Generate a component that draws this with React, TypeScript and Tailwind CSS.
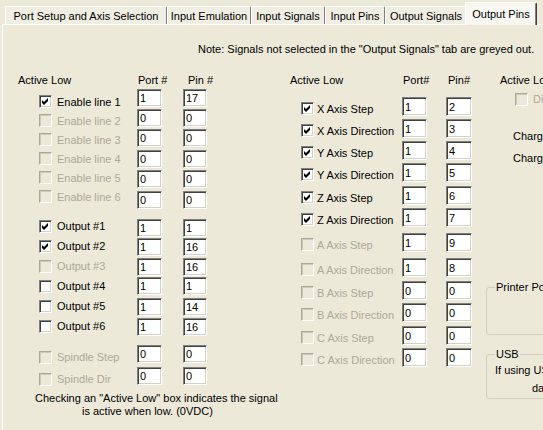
import React from "react";

type State = "on" | "off" | "dis";

const tabs = [
    { label: "Port Setup and Axis Selection", w: "w-[162px]" },
    { label: "Input Emulation", w: "w-[84px]" },
    { label: "Input Signals", w: "w-[74px]" },
    { label: "Input Pins", w: "w-[60px]" },
    { label: "Output Signals", w: "w-[82px]" },
];

const enableLabels: [string, State][] = [
    ["Enable line 1", "on"],
    ["Enable line 2", "dis"],
    ["Enable line 3", "dis"],
    ["Enable line 4", "dis"],
    ["Enable line 5", "dis"],
    ["Enable line 6", "dis"],
];

const outputLabels: [string, State][] = [
    ["Output #1", "on"],
    ["Output #2", "on"],
    ["Output #3", "dis"],
    ["Output #4", "off"],
    ["Output #5", "off"],
    ["Output #6", "off"],
];

const spindleLabels: [string, State][] = [
    ["Spindle Step", "dis"],
    ["Spindle Dir", "dis"],
];

// port, pin, row height
const enableBoxes = [
    ["1", "17", "h-[20px]"],
    ["0", "0", "h-[20px]"],
    ["0", "0", "h-[21px]"],
    ["0", "0", "h-[20px]"],
    ["0", "0", "h-[21px]"],
    ["0", "0", "h-[18px]"],
];

const outputBoxes = [
    ["1", "1", "h-[19px]"],
    ["1", "16", "h-[20px]"],
    ["1", "16", "h-[19px]"],
    ["1", "1", "h-[21px]"],
    ["1", "14", "h-[20px]"],
    ["1", "16", "h-[18px]"],
];

const spindleBoxes = [
    ["0", "0", "h-[22px]"],
    ["0", "0", "h-[18px]"],
];

const axisRows: { label: string; port: string; pin: string; state: State; h: string }[] = [
    { label: "X Axis Step", port: "1", pin: "2", state: "on", h: "h-[22px]" },
    { label: "X Axis Direction", port: "1", pin: "3", state: "on", h: "h-[22px]" },
    { label: "Y Axis Step", port: "1", pin: "4", state: "on", h: "h-[22px]" },
    { label: "Y Axis Direction", port: "1", pin: "5", state: "on", h: "h-[23px]" },
    { label: "Z Axis Step", port: "1", pin: "6", state: "on", h: "h-[22px]" },
    { label: "Z Axis Direction", port: "1", pin: "7", state: "on", h: "h-[25px]" },
    { label: "A Axis Step", port: "1", pin: "9", state: "dis", h: "h-[25px]" },
    { label: "A Axis Direction", port: "1", pin: "8", state: "dis", h: "h-[23px]" },
    { label: "B Axis Step", port: "0", pin: "0", state: "dis", h: "h-[22px]" },
    { label: "B Axis Direction", port: "0", pin: "0", state: "dis", h: "h-[23px]" },
    { label: "C Axis Step", port: "0", pin: "0", state: "dis", h: "h-[22px]" },
    { label: "C Axis Direction", port: "0", pin: "0", state: "dis", h: "h-[19px]" },
];

function CheckBox({ state }: { state: State }) {
    if (state === "dis") {
        return (
            <div className="w-[13px] h-[13px] shrink-0 border border-t-[#aca899] border-l-[#aca899] border-r-white border-b-white bg-[#ece9d8] shadow-[inset_1px_1px_0_#cdcabb]" />
        )
    }
    return (
        <div className="w-[13px] h-[13px] shrink-0 border border-t-[#808080] border-l-[#808080] border-r-white border-b-white bg-white shadow-[inset_1px_1px_0_#404040,inset_-1px_-1px_0_#d4d0c8] flex items-center justify-center">
            {state === "on" && (
                <svg width="7" height="7" viewBox="0 0 7 7">
                    <polygon points="0,2 2,4 6,0 6,3 2,7 0,5" fill="#000" />
                </svg>
            )}
        </div>
    )
}

function Option({ label, state, gap }: { label: string; state: State; gap: string }) {
    return (
        <div className={`flex items-center whitespace-nowrap ${gap}`}>
            <CheckBox state={state} />
            <span className={state === "dis" ? "text-[#aca899]" : "text-black"}>{label}</span>
        </div>
    )
}

function NumBox({ value, w, h }: { value: string; w: string; h: string }) {
    return (
        <div className={`${w} ${h} shrink-0 bg-white border border-t-[#808080] border-l-[#808080] border-r-white border-b-white shadow-[inset_1px_1px_0_#404040,inset_-1px_-1px_0_#d4d0c8] pl-[2px] flex items-center`}>
            {value}
        </div>
    )
}

function BoxRow({ port, pin, h }: { port: string; pin: string; h: string }) {
    return (
        <div className={`flex items-start ${h}`}>
            <NumBox value={port} w="w-[25px]" h="h-[18px]" />
            <div className="ml-[21px]">
                <NumBox value={pin} w="w-[24px]" h="h-[18px]" />
            </div>
        </div>
    )
}

function TabStrip() {
    return (
        <div className="flex items-end h-[25px] pl-[5px]">
            {tabs.map((t) => (
                <div
                    key={t.label}
                    className={`${t.w} h-[18px] mb-[1px] pt-[1px] shrink-0 flex items-center justify-center whitespace-nowrap bg-[#f0eee3] border-t border-l border-white border-r border-r-[#808080] rounded-t-[2px]`}
                >
                    {t.label}
                </div>
            ))}
            <div className="relative z-10 -ml-[2px] w-[72px] h-[23px] shrink-0 flex items-center justify-center whitespace-nowrap bg-[#f8f7f2] border-t border-l border-white border-r border-r-[#404040] shadow-[inset_-1px_0_0_#808080] rounded-t-[2px]">
                Output Pins
            </div>
        </div>
    )
}

function LeftColumn() {
    return (
        <div className="w-[272px] shrink-0">
            <div className="flex h-[14px]">
                <div className="w-[120px]">Active Low</div>
                <div className="w-[50px]">Port #</div>
                <div>Pin #</div>
            </div>
            <div className="flex">
                <div className="ml-[21px] w-[98px] mt-[5px]">
                    {enableLabels.map(([l, s]) => (
                        <div key={l} className="h-[19px] flex items-center">
                            <Option label={l} state={s} gap="gap-[5px]" />
                        </div>
                    ))}
                    <div className="mt-[10px]">
                        {outputLabels.map(([l, s]) => (
                            <div key={l} className="h-[20px] flex items-center">
                                <Option label={l} state={s} gap="gap-[5px]" />
                            </div>
                        ))}
                    </div>
                    <div className="mt-[10px]">
                        {spindleLabels.map(([l, s]) => (
                            <div key={l} className="h-[22px] flex items-center">
                                <Option label={l} state={s} gap="gap-[5px]" />
                            </div>
                        ))}
                    </div>
                </div>
                <div className="mt-[2px]">
                    {enableBoxes.map(([p, n, h], i) => (
                        <BoxRow key={"e" + i} port={p} pin={n} h={h} />
                    ))}
                    <div className="mt-[10px]">
                        {outputBoxes.map(([p, n, h], i) => (
                            <BoxRow key={"o" + i} port={p} pin={n} h={h} />
                        ))}
                    </div>
                    <div className="mt-[9px]">
                        {spindleBoxes.map(([p, n, h], i) => (
                            <BoxRow key={"s" + i} port={p} pin={n} h={h} />
                        ))}
                    </div>
                </div>
            </div>
            <div className="mt-[2px] leading-[13px] whitespace-nowrap">
                <div className="pl-[17px]">Checking an "Active Low" box indicates the signal</div>
                <div className="pl-[64px]">is active when low. (0VDC)</div>
            </div>
        </div>
    )
}

function AxisColumn() {
    return (
        <div className="w-[196px] shrink-0">
            <div className="flex h-[14px]">
                <div className="w-[113px]">Active Low</div>
                <div className="w-[45px]">Port#</div>
                <div>Pin#</div>
            </div>
            <div className="mt-[10px]">
                {axisRows.map((r) => (
                    <div key={r.label} className={`flex items-start pl-[11px] ${r.h}`}>
                        <div className="w-[101px] h-[19px] mt-[2px] flex items-center">
                            <Option label={r.label} state={r.state} gap="gap-[3px]" />
                        </div>
                        <NumBox value={r.port} w="w-[25px]" h="h-[19px]" />
                        <div className="ml-[19px]">
                            <NumBox value={r.pin} w="w-[26px]" h="h-[19px]" />
                        </div>
                    </div>
                ))}
            </div>
        </div>
    )
}

function RightColumn() {
    return (
        <div className="w-[300px] shrink-0 whitespace-nowrap">
            <div className="h-[14px] pl-[14px]">Active Low</div>
            <div className="mt-[5px] pl-[29px]">
                <Option label="Digitize Trig" state="dis" gap="gap-[5px]" />
            </div>
            <div className="mt-[23px] pl-[27px]">Charge Pump</div>
            <div className="mt-[8px] pl-[27px]">Charge Pump2</div>
            <fieldset className="mt-[115px] h-[55px] w-[260px] border border-[#d0d0bf] rounded-[3px]">
                <legend className="ml-[8px] px-[1px] leading-[14px]">Printer Port</legend>
            </fieldset>
            <fieldset className="mt-[12px] h-[52px] w-[260px] border border-[#d0d0bf] rounded-[3px]">
                <legend className="ml-[8px] px-[1px] leading-[14px]">USB</legend>
                <div className="leading-[18px]">
                    <div className="pl-[8px]">If using USB hardware, set the pins in the plugin</div>
                    <div className="pl-[45px]">data dialog instead.</div>
                </div>
            </fieldset>
        </div>
    )
}

export default function App() {
    return (
        <div className="w-[543px] h-[430px] overflow-hidden bg-[#ece9d8] text-black text-[11px] leading-[14px] font-['Liberation_Sans',Arial,sans-serif]">
            <TabStrip />
            <div className="ml-[2px] -mt-px w-[600px] h-[410px] border-t border-l border-white">
                <div className="mt-[17px] pl-[195px] whitespace-nowrap">
                    Note: Signals not selected in the "Output Signals" tab are greyed out.
                </div>
                <div className="flex mt-[17px] ml-[15px]">
                    <LeftColumn />
                    <AxisColumn />
                    <RightColumn />
                </div>
            </div>
        </div>
    )
}
